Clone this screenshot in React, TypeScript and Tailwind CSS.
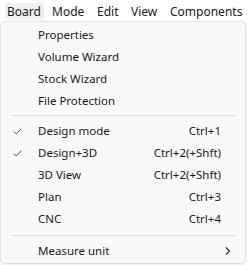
import { ReactNode } from 'react'

const font = { fontFamily: '"Segoe UI", "Noto Sans", sans-serif' }

function Check() {
  return (
    <svg width="9" height="7" viewBox="0 0 9 7" className="text-[#555]">
      <path d="M0.8 3.6 L3.2 6 L8.2 0.8" fill="none" stroke="currentColor" strokeWidth="1" />
    </svg>
  )
}

function Item({ label, shortcut, checked, sub }: { label: string; shortcut?: string; checked?: boolean; sub?: boolean }) {
  return (
    <div className="flex h-[22px] items-center">
      <div className="flex w-[37px] pl-[12px]">{checked && <Check />}</div>
      <span className="flex-1">{label}</span>
      {shortcut && <span className="pr-[24px]">{shortcut}</span>}
      {sub && (
        <svg width="6" height="8" viewBox="0 0 6 8" className="mr-[14px]">
          <path d="M1 0.5 L4.5 4 L1 7.5" fill="none" stroke="#333" strokeWidth="1.2" />
        </svg>
      )}
    </div>
  )
}

function Sep({ top }: { top: string }) {
  return <div className={`mx-[9px] mb-[4px] h-px bg-[#e0e0e0] ${top}`} />
}

function Top({ children, className }: { children: ReactNode; className: string }) {
  return <div className={`flex h-[17px] shrink-0 items-center rounded-[3px] ${className}`}>{children}</div>
}

export default function App() {
  return (
    <div className="h-[265px] w-[247px] overflow-hidden bg-white text-[11.5px] text-[#1a1a1a]" style={font}>
      <div className="flex h-[21px] items-start pl-[5px] pt-[3px] text-[12px]">
        <Top className="w-[39px] bg-[#f0f0f0] pl-[2px]">Board</Top>
        <Top className="w-[46px] pl-[8px]">Mode</Top>
        <Top className="w-[34px] pl-[7px]">Edit</Top>
        <Top className="w-[39px] pl-[7px]">View</Top>
        <Top className="pl-[7px]">Components</Top>
      </div>
      <div className="w-[246px] rounded-[5px] border border-[#e2e2e2] bg-[#f9f9f9] pb-[1px] pt-[2px] shadow-[0_1px_2px_rgba(0,0,0,0.08)]">
        <Item label="Properties" />
        <Item label="Volume Wizard" />
        <Item label="Stock Wizard" />
        <Item label="File Protection" />
        <Sep top="mt-[3px]" />
        <Item label="Design mode" shortcut="Ctrl+1" checked />
        <Item label="Design+3D" shortcut="Ctrl+2(+Shft)" checked />
        <Item label="3D View" shortcut="Ctrl+2(+Shft)" />
        <Item label="Plan" shortcut="Ctrl+3" />
        <Item label="CNC" shortcut="Ctrl+4" />
        <Sep top="mt-[5px]" />
        <Item label="Measure unit" sub />
      </div>
    </div>
  )
}
